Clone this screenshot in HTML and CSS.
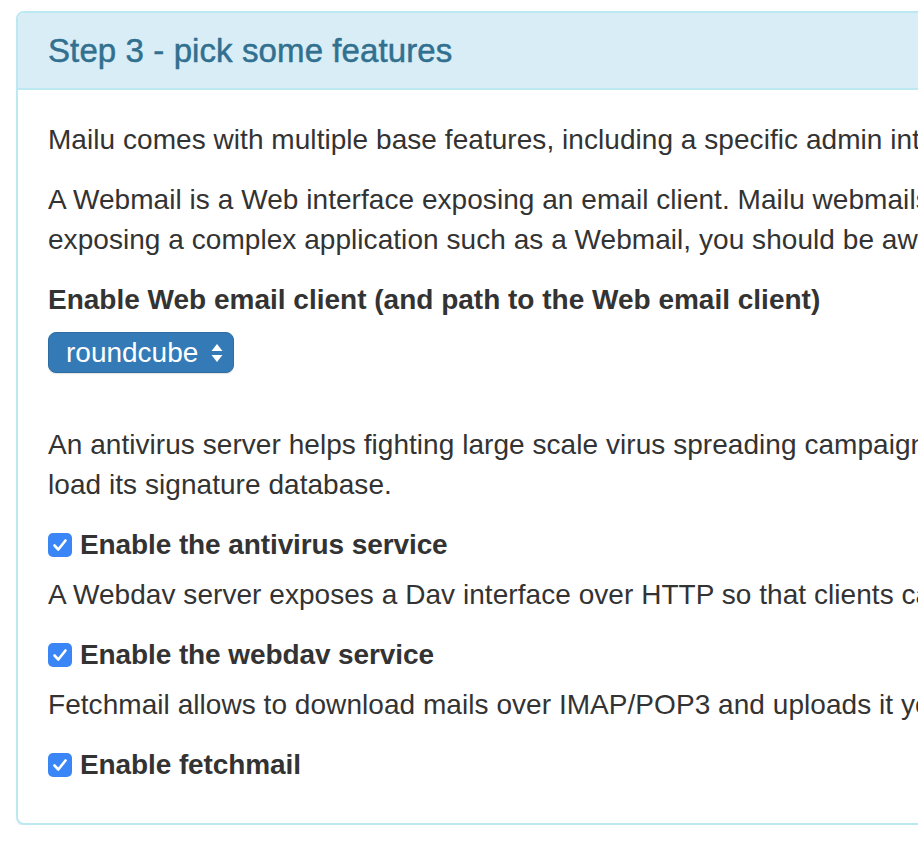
FILE: index.html
```html
<!DOCTYPE html>
<html lang="en">
<head>
<meta charset="utf-8">
<title>Step 3 - pick some features</title>
<link rel="stylesheet" href="styles.css">
</head>
<body>
<div class="panel">
  <div class="panel-heading">
    <h3 class="panel-title">Step 3 - pick some features</h3>
  </div>
  <div class="panel-body">
    <p>Mailu comes with multiple base features, including a specific admin interface, Web email clients, antispam, antivirus, etc. In this section you can enable the services to you liking.</p>
    <p>A Webmail is a Web interface exposing an email client. Mailu webmails are bound to the internal IMAP and SMTP server for users to access their mailbox through the Web. By<br>exposing a complex application such as a Webmail, you should be aware of the security implications caused by such an increase of attack surface.</p>
    <div class="form-group">
      <label class="field-label">Enable Web email client (and path to the Web email client)</label>
      <div class="select-wrap">
        <select class="select-btn" name="webmail_type">
          <option>none</option>
          <option selected>roundcube</option>
          <option>rainloop</option>
        </select>
        <svg class="select-arrows" width="12" height="20" viewBox="0 0 12 20" aria-hidden="true">
          <path d="M6 1 L11.5 8 L0.5 8 Z" fill="#fff"/>
          <path d="M6 19 L11.5 12 L0.5 12 Z" fill="#fff"/>
        </svg>
      </div>
    </div>
    <p>An antivirus server helps fighting large scale virus spreading campaigns that leverage emails for initial infection. Make sure that you have at least 1GB of memory for ClamAV to<br>load its signature database.</p>
    <div class="check">
      <span class="box"><svg width="24" height="24" viewBox="0 0 24 24"><path d="M6.5 12.5 L10.3 16.5 L17.5 7.5" fill="none" stroke="#fff" stroke-width="2.6" stroke-linecap="round" stroke-linejoin="round"/></svg></span>
      <span class="check-text">Enable the antivirus service</span>
    </div>
    <p>A Webdav server exposes a Dav interface over HTTP so that clients can store contacts or calendars using the mail account.</p>
    <div class="check">
      <span class="box"><svg width="24" height="24" viewBox="0 0 24 24"><path d="M6.5 12.5 L10.3 16.5 L17.5 7.5" fill="none" stroke="#fff" stroke-width="2.6" stroke-linecap="round" stroke-linejoin="round"/></svg></span>
      <span class="check-text">Enable the webdav service</span>
    </div>
    <p>Fetchmail allows to download mails over IMAP/POP3 and uploads it your Mailu mailbox.</p>
    <div class="check">
      <span class="box"><svg width="24" height="24" viewBox="0 0 24 24"><path d="M6.5 12.5 L10.3 16.5 L17.5 7.5" fill="none" stroke="#fff" stroke-width="2.6" stroke-linecap="round" stroke-linejoin="round"/></svg></span>
      <span class="check-text">Enable fetchmail</span>
    </div>
  </div>
</div>
</body>
</html>
```
FILE: styles.css
```css
html, body {
  margin: 0;
  padding: 0;
  overflow: hidden;
  background: #fff;
}
body {
  padding: 11px 0 0 16px;
  font-family: "Liberation Sans", Arial, Helvetica, sans-serif;
  font-size: 28px;
  line-height: 40px;
  color: #333;
}
.panel {
  width: 2400px;
  border: 2px solid #bce8f1;
  border-radius: 8px;
  box-shadow: 0 2px 2px rgba(0,0,0,0.05);
  background: #fff;
}
.panel-heading {
  background: #d9edf7;
  color: #31708f;
  padding: 20px 30px;
  border-bottom: 2px solid #bce8f1;
  border-radius: 6px 6px 0 0;
}
.panel-title {
  margin: 0;
  font-size: 33px;
  line-height: 35px;
  font-weight: 400;
  letter-spacing: 0.1px;
  -webkit-text-stroke: 0.5px #31708f;
  color: #31708f;
}
.panel-body {
  padding: 30px 30px 38px;
}
p {
  margin: 0 0 20px;
  letter-spacing: 0.05px;
}
.form-group {
  margin-bottom: 52px;
}
.field-label {
  display: block;
  font-weight: 700;
  margin-bottom: 12px;
}
.select-wrap {
  position: relative;
  display: inline-block;
  vertical-align: top;
}
.select-btn {
  appearance: none;
  -webkit-appearance: none;
  display: block;
  width: 186px;
  height: 41px;
  margin: 0;
  padding: 0 0 0 17px;
  font-family: "Liberation Sans", Arial, Helvetica, sans-serif;
  font-size: 28px;
  line-height: 39px;
  color: #fff;
  background: #337ab7;
  border: 1px solid #2e6da4;
  border-radius: 8px;
  box-shadow: 0 1px 1px rgba(0,0,0,0.12);
  outline: none;
}
.select-arrows {
  position: absolute;
  right: 11px;
  top: 11px;
  pointer-events: none;
}
.check {
  display: flex;
  align-items: center;
  height: 40px;
  margin: 0 0 10px;
  font-weight: 700;
  letter-spacing: -0.1px;
}
.check:last-child {
  margin-bottom: 0;
}
.box {
  display: flex;
  width: 24px;
  height: 24px;
  border-radius: 5px;
  background: #3b86f6;
  margin-right: 8px;
  flex: none;
}
```
